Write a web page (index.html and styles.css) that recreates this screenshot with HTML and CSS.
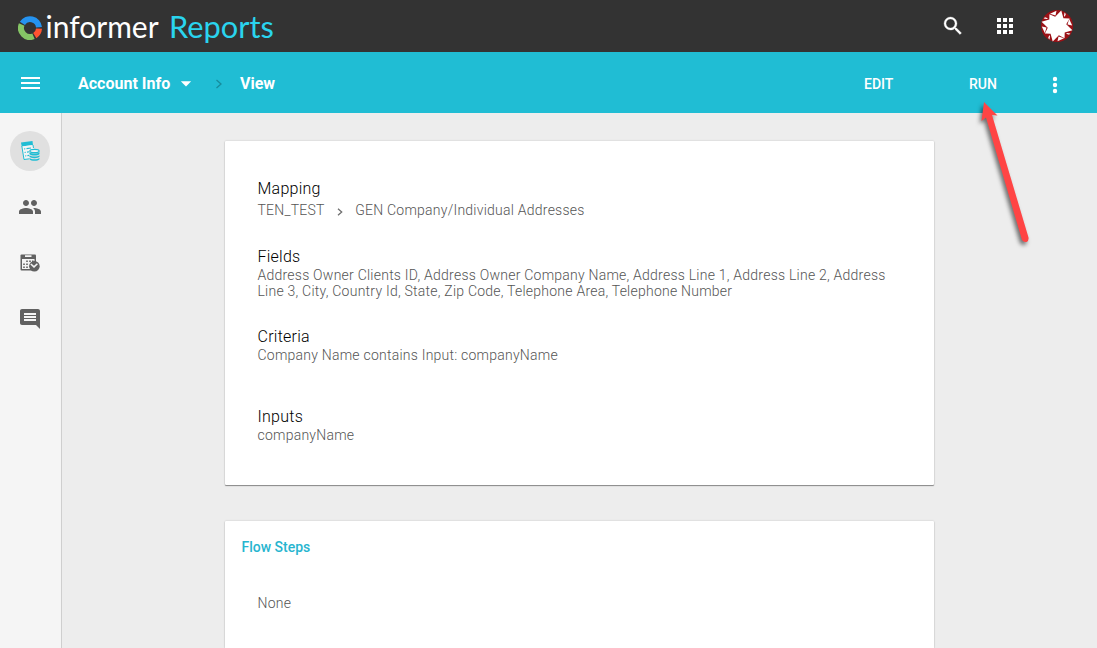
FILE: index.html
```html
<!DOCTYPE html>
<html lang="en">
<head>
<meta charset="utf-8">
<title>Informer Reports</title>
<link rel="stylesheet" href="styles.css">
</head>
<body>
<header class="topbar">
  <svg class="logo" width="24" height="24" viewBox="0 0 24 24" fill="none" stroke-width="6">
    <path stroke="#2593f0" d="M4.4 7.4A9 9 0 0 1 21 11.2"/>
    <path stroke="#ff5330" d="M21 12.6A9 9 0 0 1 16.8 19.6"/>
    <path stroke="#85c565" d="M15.5 20.3A9 9 0 0 1 3.7 8.5"/>
  </svg>
  <span class="brand">informer</span>
  <span class="product">Reports</span>
  <div class="top-actions">
    <svg width="24" height="24" viewBox="0 0 24 24" fill="#fff"><path stroke="#fff" stroke-width=".3" d="M15.5 14h-.79l-.28-.27A6.47 6.47 0 0 0 16 9.5 6.5 6.5 0 1 0 9.5 16c1.61 0 3.09-.59 4.23-1.57l.27.28v.79l5 4.99L20.49 19l-4.99-5zm-6 0C7.01 14 5 11.99 5 9.5S7.01 5 9.5 5 14 7.01 14 9.5 11.99 14 9.5 14z"/></svg>
    <svg width="24" height="24" viewBox="0 0 24 24" fill="#fff"><path d="M4 4h4v4H4zm6 0h4v4h-4zm6 0h4v4h-4zM4 10h4v4H4zm6 0h4v4h-4zm6 0h4v4h-4zM4 16h4v4H4zm6 0h4v4h-4zm6 0h4v4h-4z"/></svg>
    <svg class="avatar" width="32" height="32" viewBox="0 0 32 32">
      <circle cx="16" cy="16" r="16" fill="#9b1116"/>
      <path fill="#fff" d="M20 .5L22.3 8.2 28.5 8.2 25.2 14 31.5 20 23.8 22.3 23.8 28 18 25.2 12 31.5 9.7 23.8 4 23.8 6.8 18 .5 12 8.2 9.7 8.2 4.5 14 6.8z" transform="rotate(1 16 16)"/>
      <g fill="#fff">
        <path d="M9 3.8L15.5 .8 14.5 5.5z"/>
        <path d="M9 3.8L15.5 .8 14.5 5.5z" transform="rotate(90 16 16)"/>
        <path d="M9 3.8L15.5 .8 14.5 5.5z" transform="rotate(180 16 16)"/>
        <path d="M9 3.8L15.5 .8 14.5 5.5z" transform="rotate(270 16 16)"/>
        <path d="M23.5 2.6L24.8 4 23.8 6.8 23 6z"/>
        <path d="M23.5 2.6L24.8 4 23.8 6.8 23 6z" transform="rotate(90 16 16)"/>
        <path d="M23.5 2.6L24.8 4 23.8 6.8 23 6z" transform="rotate(180 16 16)"/>
        <path d="M23.5 2.6L24.8 4 23.8 6.8 23 6z" transform="rotate(270 16 16)"/>
      </g>
    </svg>
  </div>
</header>
<nav class="toolbar">
  <svg class="menu" width="24" height="24" viewBox="0 0 24 24" fill="#fff"><path d="M3 18h19v-2H3zm0-5h19v-2H3zm0-7v2h19V6z"/></svg>
  <span class="crumb account">Account Info</span>
  <svg class="caret" width="12" height="6" viewBox="0 0 12 6" fill="#fff"><path d="M.8 .3h10.4L6 5.5z"/></svg>
  <svg class="sep" width="8" height="10" viewBox="0 0 8 10" fill="none" stroke="#168c9c" stroke-width="1.3"><path d="M1.5 1L6 5 1.5 9"/></svg>
  <span class="crumb">View</span>
  <div class="commands">
    <span class="command edit">EDIT</span>
    <span class="command run">RUN</span>
    <svg width="24" height="24" viewBox="0 0 24 24" fill="#fff"><circle cx="12" cy="6" r="2.2"/><circle cx="12" cy="12" r="2.2"/><circle cx="12" cy="18" r="2.2"/></svg>
  </div>
</nav>
<div class="body">
  <aside class="sidebar">
    <div class="side-item active">
      <svg class="report-icon" width="22" height="22" viewBox="0 0 22 22">
        <path fill="#20bdd4" d="M1 2.5L12.5 1 13 5 1.7 6.6z"/>
        <path fill="#f4f4f4" d="M1.7 6.6L13 5 14 9 10 10.5V19L4 19.5z"/>
        <path fill="none" stroke="#20bdd4" stroke-width="1" d="M1.8 6L4 19.5 9.5 18.8M13 5L13.5 8"/>
        <path stroke="#20bdd4" stroke-width="1.1" d="M4 9L5.3 8.8M6.5 8.6L11 8M4.6 12.5L5.8 12.3M7 12.1L9.3 11.8M5.1 16L6.3 15.8M7.4 15.6L9.3 15.4"/>
        <path fill="#e1e1e1" d="M9.2 10h10.6v10H9.2z"/>
        <ellipse cx="14.5" cy="11" rx="4.6" ry="1.7" fill="#f4f4f4" stroke="#20bdd4" stroke-width="1.2"/>
        <path fill="#20bdd4" d="M9.5 12.2C11 14 18 14 19.5 12.2V14C18 16 11 16 9.5 14zM9.5 15.3C11 17 18 17 19.5 15.3V16.7C18 18.6 11 18.6 9.5 16.7zM9.5 18C11 19.7 18 19.7 19.5 18V19.2C18 21.2 11 21.2 9.5 19.2z"/>
      </svg>
    </div>
    <div class="side-item">
      <svg width="24" height="24" viewBox="0 0 24 24" fill="#616161"><path d="M16 11c1.66 0 2.99-1.34 2.99-3S17.66 5 16 5s-3 1.34-3 3 1.34 3 3 3zm-8 0c1.66 0 2.99-1.34 2.99-3S9.66 5 8 5 5 6.34 5 8s1.34 3 3 3zm0 2c-2.33 0-7 1.17-7 3.5V19h14v-2.5c0-2.33-4.67-3.5-7-3.5zm8 0c-.29 0-.62.02-.97.05 1.16.84 1.97 1.97 1.97 3.45V19h6v-2.5c0-2.33-4.67-3.5-7-3.5z"/></svg>
    </div>
    <div class="side-item">
      <svg width="20" height="18" viewBox="0 0 20 18">
        <path fill="#616161" d="M1.5 .5H15q1 0 1 1V15.5q0 1-1 1H1.5q-1 0-1-1V1.5q0-1 1-1z"/>
        <path fill="#f4f4f4" d="M5 1.3H11.5V3H5zM2 5H14.5V15H2z"/>
        <path fill="#616161" d="M6.2 6.5h1.6v1.6H6.2zM9.2 6.5h1.6v1.6H9.2zM12 6.5h1.6v1.6H12zM3.2 9.5h1.6v1.6H3.2zM6.2 9.5h1.6v1.6H6.2zM3.2 12.4h1.6V14H3.2zM6.2 12.4h1.6V14H6.2z"/>
        <circle cx="14.4" cy="12.2" r="5.3" fill="#616161"/>
        <path fill="none" stroke="#f4f4f4" stroke-width="1.5" d="M10.8 10L14 12.9 17.4 9.7"/>
      </svg>
    </div>
    <div class="side-item">
      <svg width="24" height="24" viewBox="0 0 24 24" fill="#616161"><path d="M21.99 4c0-1.1-.89-2-1.99-2H4c-1.1 0-2 .9-2 2v12c0 1.1.9 2 2 2h14l4 4-.01-18zM18 14H6v-2h12v2zm0-3H6V9h12v2zm0-3H6V6h12v2z"/></svg>
    </div>
  </aside>
  <main class="content">
    <section class="card details">
      <div class="group mapping">
        <h2>Mapping</h2>
        <div class="path"><span>TEN_TEST</span><svg width="6" height="8" viewBox="0 0 6 8" fill="none" stroke="#6f6f6f" stroke-width="1.3"><path d="M1 .7L4.7 4 1 7.3"/></svg><span>GEN Company/Individual Addresses</span></div>
      </div>
      <div class="group"><h2>Fields</h2><p>Address Owner Clients ID, Address Owner Company Name, Address Line 1, Address Line 2, Address<br>Line 3, City, Country Id, State, Zip Code, Telephone Area, Telephone Number</p></div>
      <div class="group"><h2>Criteria</h2><p>Company Name contains Input: companyName</p></div>
      <div class="group"><h2>Inputs</h2><p>companyName</p></div>
    </section>
    <section class="card flow">
      <h3>Flow Steps</h3>
      <p>None</p>
    </section>
  </main>
</div>
<svg class="pointer" width="70" height="160" viewBox="0 0 70 160">
  <path fill="#ff4444" d="M13 8L26.5 21.5 21 21 57.5 143.5Q58 147 55.5 148 52.5 148.5 51 146L15 23.5 10.5 27z"/>
</svg>
</body>
</html>
```
FILE: styles.css
```css
* { box-sizing: border-box; }
body {
  margin: 0;
  height: 648px;
  overflow: hidden;
  display: flex;
  flex-direction: column;
  background: #ededed;
  font-family: Roboto, sans-serif;
  position: relative;
}
svg { display: block; flex: none; }
h2, h3, p { margin: 0; }
.topbar {
  height: 52px;
  flex: none;
  background: #333;
  display: flex;
  align-items: center;
  padding: 0 24px 0 17.5px;
  font-family: Lato, sans-serif;
  white-space: nowrap;
}
.logo { margin-top: 3px; }
.brand { width: 125px; padding: 0 0 1px 4px; font-size: 30px; line-height: 36px; color: #fff; }
.product { padding: 2px 0 0 2.5px; font-size: 30.8px; line-height: 36px; color: #2ad4ee; }
.top-actions { margin-left: auto; display: flex; align-items: center; gap: 28px; }
.avatar { margin-left: -4px; }
.toolbar {
  height: 61px;
  flex: none;
  background: #20bdd4;
  display: flex;
  align-items: center;
  padding: 0 30px 0 18px;
  color: #fff;
}
.crumb { font-size: 16px; font-weight: 700; line-height: 20px; padding-top: 2px; }
.account { margin-left: 36px; width: 93px; white-space: nowrap; }
.caret { margin: 3px 0 0 9px; }
.sep { margin: 3px 17px 0 23px; }
.commands { margin-left: auto; display: flex; align-items: center; font-size: 14px; font-weight: 500; }
.commands svg { margin-top: 5px; }
.command { line-height: 20px; padding-top: 2px; }
.edit { width: 105px; }
.run { width: 74px; }
.body { flex: 1; min-height: 0; display: flex; overflow: hidden; }
.sidebar {
  width: 62px;
  flex: none;
  border-right: 1px solid #cfcfcf;
  background: #f5f5f5;
  padding: 18px 10px;
  display: flex;
  flex-direction: column;
  gap: 16px;
}
.side-item { width: 40px; height: 40px; border-radius: 50%; display: flex; align-items: center; justify-content: center; }
.active { background: #e0e0e0; }
.report-icon { margin-left: 2px; }
.content { flex: 1; min-width: 0; overflow: hidden; padding: 28px 163px 0; display: flex; flex-direction: column; gap: 36px; }
.card {
  background: #fff;
  border-radius: 1px;
  box-shadow: 0 1px 1px rgba(0,0,0,.4), 0 0 2px rgba(0,0,0,.18);
  color: #555;
  font-size: 14px;
  font-weight: 300;
  line-height: 16px;
  letter-spacing: .235px;
  white-space: nowrap;
}
.details { height: 344px; flex: none; padding: 37px 32.5px; }
.group { height: 80px; }
.mapping { height: 68px; }
.group h2 { font-size: 16px; font-weight: 300; line-height: 21px; letter-spacing: .25px; color: #000; }
.path { display: flex; align-items: center; padding-top: 3px; }
.path svg { margin: 3px 12px 0 12.5px; }
.flow { flex: 1; min-height: 0; padding: 18px 16.5px 0; border-radius: 1px 1px 0 0; }
.flow h3 { font-size: 14px; font-weight: 500; line-height: 16px; letter-spacing: 0; color: #27b5cf; }
.flow p { padding: 40px 16px 0; }
.pointer { position: absolute; left: 971px; top: 94px; filter: drop-shadow(-2px 3px 2px rgba(0,0,0,.55)); }
```
